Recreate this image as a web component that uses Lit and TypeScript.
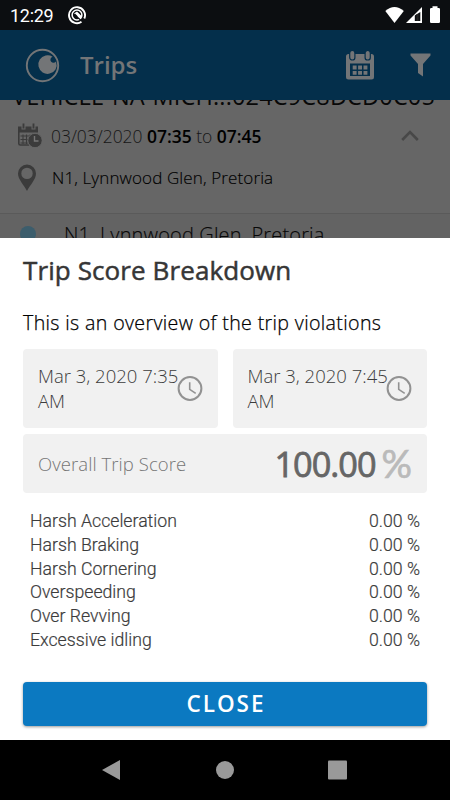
import { LitElement, html, css } from "lit";
import { customElement } from "lit/decorators.js";

const VIOLATIONS = [
  "Harsh Acceleration",
  "Harsh Braking",
  "Harsh Cornering",
  "Overspeeding",
  "Over Revving",
  "Excessive idling",
];

const clock = html`<svg class="clock" viewBox="0 0 26 26">
  <circle cx="13" cy="12.5" r="11.4" fill="none" stroke="#929292" stroke-width="2" />
  <path d="M12.7 6.3v7l6 4" fill="none" stroke="#929292" stroke-width="1.6" />
</svg>`;

@customElement("app-root")
export class AppRoot extends LitElement {
  static styles = css`
    :host {
      display: flex;
      flex-direction: column;
      width: 450px;
      height: 800px;
      overflow: hidden;
      font-family: "Open Sans", sans-serif;
      background: #fff;
    }
    svg { display: block; flex: none; }
    span, h1, h2, p { margin: 0; white-space: nowrap; }
    .status {
      height: 30px;
      flex: none;
      display: flex;
      align-items: center;
      padding: 0 10px;
      box-sizing: border-box;
      background: #0c0e11;
      color: #fff;
      font: 18px/30px Roboto, sans-serif;
    }
    .time { width: 57px; letter-spacing: -0.3px; padding-top: 1px; }
    .signals { margin-left: auto; margin-right: -10px; }
    .header {
      height: 70px;
      flex: none;
      display: flex;
      align-items: center;
      background: #042f4b;
      color: #737577;
    }
    .logo { margin-left: 25px; }
    .header h1 { margin-left: 20px; font-size: 24px; font-weight: 600; line-height: 70px; flex: 1; }
    .filter { margin: 0 19px 0 36px; }
    .behind {
      height: 138px;
      flex: none;
      overflow: hidden;
      display: flex;
      flex-direction: column;
      background: #666;
      color: #080808;
    }
    .vehicle { height: 14px; margin-top: -4px; padding-left: 12px; line-height: 0; font-size: 23.5px; flex: none; }
    .vehicle span { letter-spacing: 0.16px; }
    .when { display: flex; align-items: center; height: 46px; flex: none; padding: 4px 31px 0 17px; box-sizing: border-box; }
    .when span { margin-left: 9px; flex: 1; font-size: 17.45px; font-weight: 300; color: #161616; padding-top: 2px; }
    .when b { font-weight: 600; color: #000; }
    .where { display: flex; align-items: center; height: 43px; padding-left: 18px; flex: none; }
    .where span { margin-left: 16px; font-size: 17px; font-weight: 300; letter-spacing: 0.12px; color: #000; -webkit-text-stroke: 0.15px #000; }
    .stop {
      margin-top: 14px;
      height: 40px;
      flex: none;
      border-top: 1px solid #5a5a5a;
      background: #636363;
      display: flex;
      align-items: flex-start;
      padding: 8px 0 0 20px;
    }
    .dot { width: 16px; height: 16px; border-radius: 50%; background: #3c5d6c; margin-top: 4px; }
    .stop span { margin-left: 28px; font-size: 20px; font-weight: 300; letter-spacing: 0.15px; line-height: 26px; -webkit-text-stroke: 0.15px #080808; }
    .sheet {
      height: 502px;
      flex: none;
      box-sizing: border-box;
      padding: 0 23px 14px;
      background: #fff;
      display: flex;
      flex-direction: column;
    }
    .sheet h2 { margin-top: 15px; font-size: 26px; line-height: 34px; font-weight: 400; letter-spacing: 0.1px; color: #363636; -webkit-text-stroke: 0.5px #363636; }
    .intro { margin-top: 23px; font-size: 19.6px; line-height: 26px; font-weight: 300; letter-spacing: 0.36px; color: #000; -webkit-text-stroke: 0.25px #000; }
    .dates { margin-top: 13px; display: flex; gap: 15px; }
    .card { background: #f1f1f1; border-radius: 4px; display: flex; align-items: center; box-sizing: border-box; padding: 0 15px; }
    .date { flex: 1; height: 79px; font-size: 18.5px; font-weight: 300; line-height: 24.5px; color: #3c3c3c; }
    .date span { width: 138.5px; overflow: visible; }
    .clock { width: 26px; height: 26px; }
    .score { margin-top: 6px; height: 59px; }
    .score .name { flex: 1; font-size: 18.5px; font-weight: 300; letter-spacing: 0.07px; color: #757575; }
    .score .value { font-size: 34.3px; font-weight: 400; letter-spacing: -1px; color: #666; -webkit-text-stroke: 0.8px #666; }
    .score .unit { font: 400 38px/59px Lato, sans-serif; color: #bababa; -webkit-text-stroke: 0.7px #bababa; margin-left: 6px; }
    .rows { margin-top: 17px; padding: 0 7px; font: 300 17.7px/23.8px Roboto, sans-serif; color: #3c3c3c; -webkit-text-stroke: 0.2px #3c3c3c; }
    .row { display: flex; justify-content: space-between; }
    .close {
      margin-top: auto;
      height: 44px;
      border: 0;
      border-radius: 4px;
      background: #0b79c1;
      box-shadow: 0 1px 3px #0006;
      color: #fff;
      font: 600 22.5px/44px "Open Sans", sans-serif;
      letter-spacing: 2px;
      padding: 0 0 0 2px;
    }
    .nav { height: 60px; flex: none; background: #000; }
  `;

  render() {
    return html`
      <div class="status">
        <span class="time">12:29</span>
        <svg width="20" height="20" viewBox="0 0 20 20" fill="none" stroke="#fff">
          <path d="M14.500 16.800A8 8 0 1 1 17.300 13.500" stroke-width="1.900" />
          <circle cx="10" cy="10" r="4.900" stroke-width="1.500" />
          <path d="M7 8.500l3-2 5 5-2 2.500z" fill="#fff" stroke="none" />
          <path d="M7.500 9l6 6" stroke="#0c0e11" stroke-width="1.300" />
          <path d="M11 11l3 2.500" stroke-width="1.300" />
        </svg>
        <svg class="signals" width="70" height="30" viewBox="380 0 70 30" fill="#fff">
          <path d="M385.300 11Q394.500 3 403.800 11L394.500 23z" />
          <path d="M422 7v16h-16z" />
          <path d="M420.300 12v9h-5.500v-5.500z" fill="#0c0e11" />
          <path d="M418.500 14v7h-2v-7z" fill="#222" />
          <path d="M432.500 6.300h5v1.800h1.300q1.200 0 1.200 1.200v12.500q0 1.200-1.200 1.200h-7.600q-1.200 0-1.200-1.200v-12.500q0-1.200 1.200-1.200h1.300z" />
        </svg>
      </div>
      <div class="header">
        <svg class="logo" width="35" height="35" viewBox="0 0 35 35">
          <circle cx="17.500" cy="17.500" r="15.700" fill="none" stroke="#737577" stroke-width="1.900" />
          <path d="M27.600 8.700A9.300 9.300 0 1 0 30.500 21.500Q32.500 17.500 31 13.500A3.100 3.100 0 1 1 27.600 8.700z" fill="#737577" />
        </svg>
        <h1>Trips</h1>
        <svg width="28" height="30" viewBox="0 0 28 30">
          <path d="M2.500 4H25.500Q28 4 28 6.500V27Q28 29.500 25.500 29.500H2.500Q0 29.500 0 27V6.500Q0 4 2.500 4zM4 13.500V26h20V13.500z" fill="#737577" fill-rule="evenodd" />
          <g fill="#737577" stroke="#042f4b" stroke-width="1.200">
            <rect x="3.700" y="0.500" width="5.200" height="9.500" rx="2.600" />
            <rect x="19.100" y="0.500" width="5.200" height="9.500" rx="2.600" />
          </g>
          <path d="M6.700 15.500h3.900v3.900h-3.900zM12.100 15.500h3.900v3.900h-3.900zM17.500 15.500h3.900v3.900h-3.900zM6.700 20.900h3.900v3.900h-3.900zM12.100 20.900h3.900v3.900h-3.900zM17.500 20.900h3.900v3.900h-3.900z" fill="#737577" />
        </svg>
        <svg class="filter" width="21" height="24" viewBox="0 0 21 24">
          <path d="M.500.500h20v2L13 11V23.500l-5-3.500v-9L.500 2.500z" fill="#737577" />
        </svg>
      </div>
      <div class="behind">
        <div class="vehicle"><span>VEHICLE-NA-MICH...024C9C8DCD0C05</span></div>
        <div class="when">
          <svg width="25" height="25" viewBox="0 0 25 25">
            <path d="M1.800 6.500V20.500q0 1.500 1.500 1.500H12" fill="none" stroke="#3b3b3b" stroke-width="1.600" />
            <path d="M1 3.500h20v6H1z" fill="#3b3b3b" />
            <path d="M6.500 0v6.500M16.500 0v6.500" stroke="#666" stroke-width="4" />
            <path d="M6.500.500v5M16.500.500v5" stroke="#3b3b3b" stroke-width="1.800" />
            <path d="M3.500 13h12M3.500 16.500h8M3.500 20h8M6 11.500v9.500M9.500 11.500v9.500M13 11.500v3" stroke="#3b3b3b" stroke-width="1.100" />
            <circle cx="18" cy="17.500" r="7.200" fill="#3b3b3b" stroke="#666" />
            <path d="M17.500 13v5h4" fill="none" stroke="#777" stroke-width="1.400" />
          </svg>
          <span>03/03/2020 <b>07:35</b> to <b>07:45</b></span>
          <svg width="18" height="12" viewBox="0 0 18 12"><path d="M1.200 11L9 3.200l7.800 7.800" fill="none" stroke="#484848" stroke-width="2.600" /></svg>
        </div>
        <div class="where">
          <svg width="18" height="27" viewBox="0 0 18 27"><path d="M9 .500a9 9 0 0 1 9 9c0 6-6 11.500-9 17.500C6 21 0 15.500 0 9.500a9 9 0 0 1 9-9zM9 3.700a5.700 5.700 0 1 0 0 11.400a5.700 5.700 0 0 0 0-11.400z" fill="#3b3b3b" fill-rule="evenodd" /></svg>
          <span>N1, Lynnwood Glen, Pretoria</span>
        </div>
        <div class="stop"><div class="dot"></div><span>N1, Lynnwood Glen, Pretoria</span></div>
      </div>
      <div class="sheet">
        <h2><span>Trip Score Breakdown</span></h2>
        <p class="intro"><span>This is an overview of the trip violations</span></p>
        <div class="dates">
          <div class="card date"><span>Mar 3, 2020 7:35<br />AM</span>${clock}</div>
          <div class="card date"><span>Mar 3, 2020 7:45<br />AM</span>${clock}</div>
        </div>
        <div class="card score">
          <span class="name">Overall Trip Score</span>
          <span class="value">100.00</span><span class="unit">%</span>
        </div>
        <div class="rows">
          ${VIOLATIONS.map((name) => html`<div class="row"><span>${name}</span><span>0.00 %</span></div>`)}
        </div>
        <button class="close">CLOSE</button>
      </div>
      <svg class="nav" width="450" height="60" viewBox="0 0 450 60" fill="#999">
        <path d="M120 20v20L102 30z" />
        <circle cx="225" cy="30" r="9" />
        <rect x="328" y="20.500" width="19" height="19" rx="1" />
      </svg>
    `;
  }
}
